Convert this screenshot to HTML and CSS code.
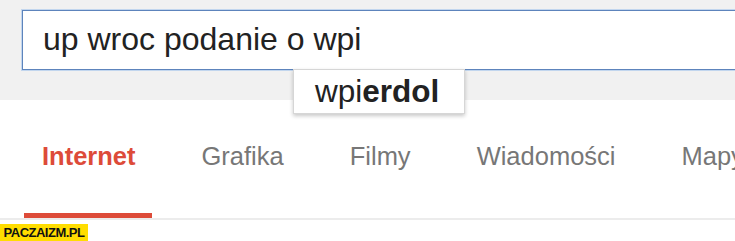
FILE: index.html
```html
<!DOCTYPE html>
<html lang="pl">
<head>
<meta charset="utf-8">
<link rel="stylesheet" href="styles.css">
</head>
<body>
<div class="top">
  <div class="search">up wroc podanie o wpi</div>
  <div class="suggest">wpi<b>erdol</b></div>
</div>
<nav class="tabs">
  <div class="tab active">Internet</div>
  <div class="tab">Grafika</div>
  <div class="tab">Filmy</div>
  <div class="tab">Wiadomości</div>
  <div class="tab">Mapy</div>
</nav>
<div class="mark">PACZAIZM.PL</div>
</body>
</html>
```
FILE: styles.css
```css
html, body {
  margin: 0;
  padding: 0;
  background: #ffffff;
  overflow: hidden;
}
body {
  width: 735px;
  height: 241px;
  font-family: "Liberation Sans", Arial, sans-serif;
  position: relative;
}
.top {
  position: relative;
  height: 100px;
  box-sizing: border-box;
  background: #f1f1f1;
  padding: 10px 0 0 22px;
}
.search {
  box-sizing: border-box;
  height: 60px;
  width: 740px;
  background: #fff;
  border: 1px solid #5d84bc;
  box-shadow: 0 0 0 1px #c2d6ee;
  padding-left: 20px;
  font-size: 32px;
  line-height: 56px;
  color: #222;
  white-space: nowrap;
}
.suggest {
  position: absolute;
  left: 293px;
  top: 69px;
  width: 172px;
  height: 45px;
  box-sizing: border-box;
  background: #fff;
  border: 1px solid #d6d6d6;
  box-shadow: 0 2px 4px rgba(0,0,0,0.22);
  padding-left: 21px;
  font-size: 31.5px;
  line-height: 42px;
  color: #222;
  white-space: nowrap;
}
.suggest b {
  font-weight: bold;
}
.tabs {
  display: flex;
  gap: 32px;
  padding-left: 24px;
  border-bottom: 2px solid #ececec;
  white-space: nowrap;
}
.tab {
  padding: 42px 16px 43px 18px;
  border-bottom: 5px solid transparent;
  font-size: 25.5px;
  line-height: 28px;
  color: #777;
}
.tab.active {
  color: #dd4b39;
  font-weight: bold;
  border-bottom-color: #dd4b39;
}
.mark {
  position: absolute;
  left: 0;
  top: 224px;
  width: 88px;
  height: 17px;
  background: #ffdd00;
  color: #111;
  font-weight: bold;
  font-size: 13px;
  line-height: 18px;
  text-align: center;
  letter-spacing: -0.5px;
}
```
